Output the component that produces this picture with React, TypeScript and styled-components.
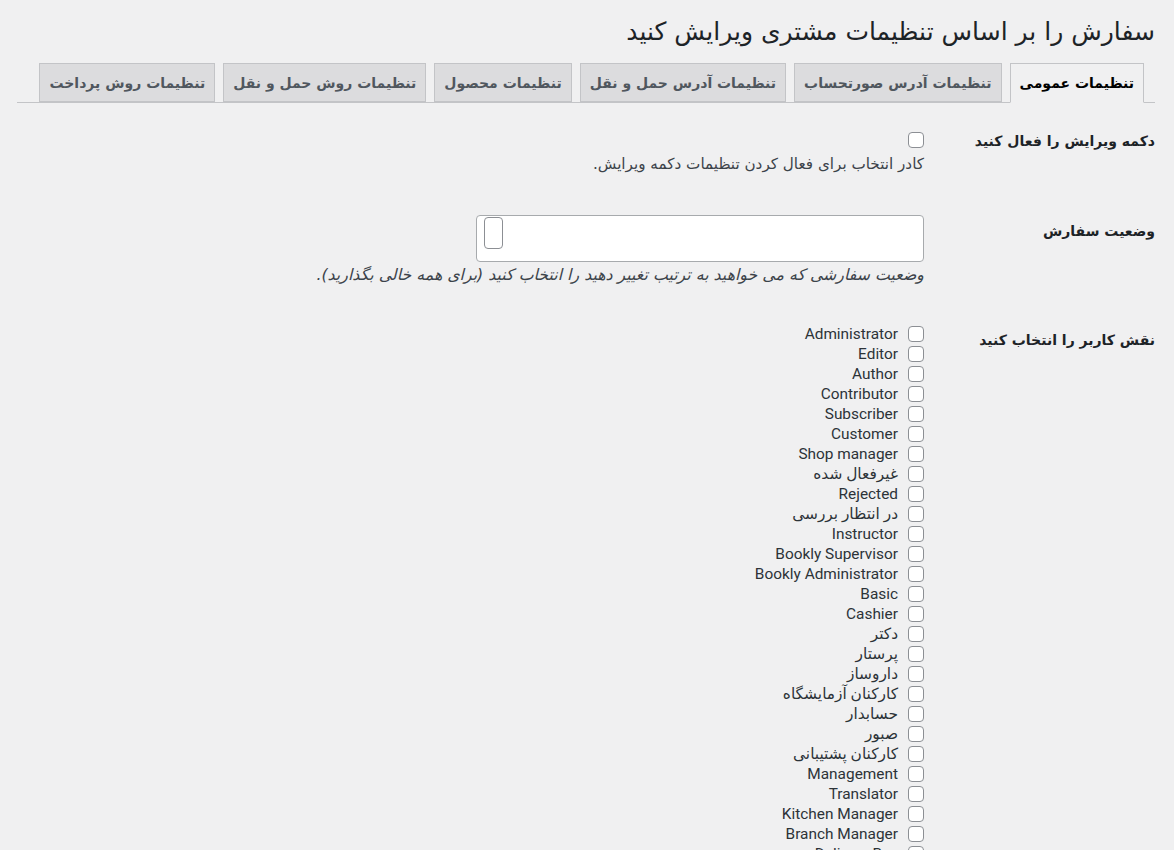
import React from "react";
import styled, { createGlobalStyle } from "styled-components";

const Global = createGlobalStyle`
  html, body { margin: 0; padding: 0; background: #f0f0f1; }
  body {
    direction: rtl;
    font-family: Roboto, "DejaVu Sans", sans-serif;
    color: #1d2327;
    font-size: 14px;
  }
`;

const Wrap = styled.div`
  padding: 14px 19px 0 17px;
`;

const Title = styled.h1`
  margin: 0;
  font-family: "DejaVu Sans", sans-serif;
  font-size: 25px;
  font-weight: 400;
  line-height: 36px;
  color: #1d2327;
`;

const TabBar = styled.nav`
  display: flex;
  gap: 8px;
  margin-top: 13px;
  padding-right: 11px;
  border-bottom: 1px solid #c3c4c7;
`;

const Tab = styled.a<{ $active?: boolean }>`
  display: block;
  box-sizing: border-box;
  padding: 0 9px;
  margin-bottom: -1px;
  font-family: "DejaVu Sans", sans-serif;
  font-size: 14px;
  font-weight: 700;
  line-height: 38px;
  white-space: nowrap;
  text-decoration: none;
  border: 1px solid #c3c4c7;
  border-bottom-color: ${(p) => (p.$active ? "#f0f0f1" : "#c3c4c7")};
  background: ${(p) => (p.$active ? "#f0f0f1" : "#dcdcde")};
  color: ${(p) => (p.$active ? "#000" : "#50575e")};
  height: ${(p) => (p.$active ? "40px" : "39px")};
`;

const Form = styled.div`
  display: flex;
  flex-direction: column;
  margin-top: 19px;
`;

const Row = styled.div<{ $top: number }>`
  display: flex;
  align-items: flex-start;
  margin-top: ${(p) => p.$top}px;
`;

const Label = styled.div<{ $pad: number }>`
  flex: 0 0 231px;
  padding-top: ${(p) => p.$pad}px;
  font-family: "DejaVu Sans", sans-serif;
  font-size: 14px;
  font-weight: 700;
  line-height: 20px;
  color: #1d2327;
`;

const Field = styled.div<{ $pad: number }>`
  display: flex;
  flex-direction: column;
  align-items: flex-start;
  padding-top: ${(p) => p.$pad}px;
`;

const Check = styled.span`
  display: inline-block;
  flex: 0 0 auto;
  width: 16px;
  height: 16px;
  box-sizing: border-box;
  border: 1px solid #8c8f94;
  border-radius: 4px;
  background: #fff;
`;

const Desc = styled.p<{ $italic?: boolean; $gap: number; $size: number }>`
  margin: ${(p) => p.$gap}px 0 0;
  font-family: "DejaVu Sans", sans-serif;
  font-size: ${(p) => p.$size}px;
  line-height: 20px;
  font-style: ${(p) => (p.$italic ? "italic" : "normal")};
  color: #3c434a;
  white-space: nowrap;
`;

const Select = styled.div`
  width: 448px;
  height: 47px;
  box-sizing: border-box;
  border: 1px solid #a7aaad;
  border-radius: 4px;
  background: #fff;
  display: flex;
  direction: ltr;
  align-items: flex-start;
  padding: 1px 0 0 7px;
`;

const SearchField = styled.span`
  width: 19px;
  height: 32px;
  box-sizing: border-box;
  border: 1px solid #8c8f94;
  border-radius: 4px;
  background: #fff;
`;

const RoleList = styled.div`
  display: flex;
  flex-direction: column;
`;

const RoleItem = styled.label`
  display: flex;
  align-items: center;
  gap: 10px;
  height: 20px;
  font-size: 15.4px;
  color: #2c3338;
  white-space: nowrap;
`;

const tabs = [
  "تنظیمات عمومی",
  "تنظیمات آدرس صورتحساب",
  "تنظیمات آدرس حمل و نقل",
  "تنظیمات محصول",
  "تنظیمات روش حمل و نقل",
  "تنظیمات روش پرداخت",
];

const roles = [
  "Administrator",
  "Editor",
  "Author",
  "Contributor",
  "Subscriber",
  "Customer",
  "Shop manager",
  "غیرفعال شده",
  "Rejected",
  "در انتظار بررسی",
  "Instructor",
  "Bookly Supervisor",
  "Bookly Administrator",
  "Basic",
  "Cashier",
  "دکتر",
  "پرستار",
  "داروساز",
  "کارکنان آزمایشگاه",
  "حسابدار",
  "صبور",
  "کارکنان پشتیبانی",
  "Management",
  "Translator",
  "Kitchen Manager",
  "Branch Manager",
  "Delivery Boy",
];

export default function App() {
  return (
    <>
      <Global />
      <Wrap>
        <Title>سفارش را بر اساس تنظیمات مشتری ویرایش کنید</Title>
        <TabBar>
          {tabs.map((t, i) => (
            <Tab key={t} $active={i === 0}>
              {t}
            </Tab>
          ))}
        </TabBar>
        <Form>
          <Row $top={0}>
            <Label $pad={9}>دکمه ویرایش را فعال کنید</Label>
            <Field $pad={10}>
              <Check />
              <Desc $gap={6} $size={15.2}>کادر انتخاب برای فعال کردن تنظیمات دکمه ویرایش.</Desc>
            </Field>
          </Row>
          <Row $top={30}>
            <Label $pad={17}>وضعیت سفارش</Label>
            <Field $pad={11}>
              <Select>
                <SearchField />
              </Select>
              <Desc $italic $gap={3} $size={15.8}>
                وضعیت سفارشی که می خواهید به ترتیب تغییر دهید را انتخاب کنید (برای همه خالی بگذارید).
              </Desc>
            </Field>
          </Row>
          <Row $top={31}>
            <Label $pad={14}>نقش کاربر را انتخاب کنید</Label>
            <Field $pad={8}>
              <RoleList>
                {roles.map((r) => (
                  <RoleItem key={r}>
                    <Check />
                    <span>{r}</span>
                  </RoleItem>
                ))}
              </RoleList>
            </Field>
          </Row>
        </Form>
      </Wrap>
    </>
  );
}
